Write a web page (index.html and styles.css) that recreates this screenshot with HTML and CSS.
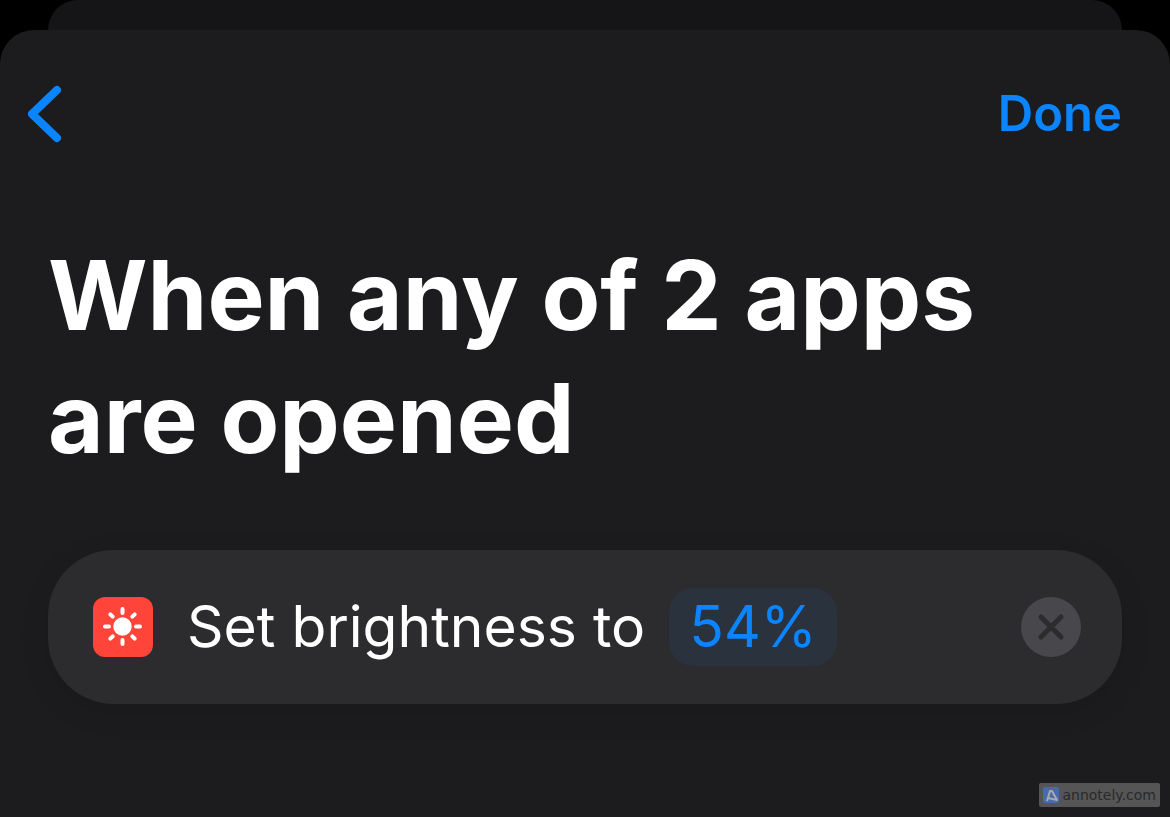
FILE: index.html
```
<!DOCTYPE html>
<html lang="en">
<head>
    <meta charset="UTF-8">
    <title>Automation</title>
    <link rel="stylesheet" href="styles.css">
</head>
<body>
<div class="back-sheet"></div>
<main class="sheet">
    <div class="nav">
        <button class="back" type="button" aria-label="Back">
            <svg width="34" height="58" viewBox="0 0 34 58"><path d="M29 5 4 29 29 53"/></svg>
        </button>
        <button class="done" type="button">Done</button>
    </div>
    <h1>When any of 2 apps are opened</h1>
    <div class="action">
        <svg class="sun" width="60" height="60" viewBox="0 0 60 60">
            <circle cx="29.5" cy="29.5" r="9.2"/>
            <path d="M29.5 12v4M29.5 43v4M12 29.5h4M43 29.5h4M17.3 17.3l2.4 2.4M39.3 39.3l2.4 2.4M41.7 17.3l-2.4 2.4M19.7 39.3l-2.4 2.4"/>
        </svg>
        <span class="text">Set brightness to</span>
        <button class="value" type="button">54%</button>
        <button class="clear" type="button" aria-label="Remove">
            <svg width="60" height="60" viewBox="0 0 60 60"><path d="M20 20 40 40M40 20 20 40"/></svg>
        </button>
    </div>
    <a class="mark" href="#">
        <svg width="16" height="16" viewBox="0 0 16 16"><rect width="16" height="16" rx="2"/><path d="M4 14 7 4h2l5 9L5 11"/></svg>
        annotely.com
    </a>
</main>
</body>
</html>
```
FILE: styles.css
```
*{box-sizing: border-box;}
html,body{height: 100%;}
body{margin: 0;background: #000;color: #fff;font-family: Inter,"Liberation Sans",sans-serif;display: flex;flex-direction: column;}
button{border: none;background: none;padding: 0;margin: 0;font: inherit;color: #0a84ff;cursor: pointer;}
svg{display: block;}
h1{margin: 0 0 70px;padding: 0 48px;font-size: 96px;line-height: 123px;font-weight: 700;}

.back-sheet{flex: none;height: 30px;margin: 0 48px;background: #151517;border-radius: 30px 30px 0 0;}
.sheet{flex: 1 0 auto;display: flex;flex-direction: column;background: #1c1c1e;border-radius: 34px 34px 0 0;}

.nav{display: flex;justify-content: space-between;align-items: center;height: 168px;margin-bottom: 36px;padding: 0 48px 0 28px;}
.back path{fill: none;stroke: #0a84ff;stroke-width: 8;stroke-linecap: round;stroke-linejoin: round;}
.done{font-size: 49px;line-height: 62px;font-weight: 600;}

.action{display: flex;align-items: center;height: 154px;margin: 0 48px;padding: 0 41px 0 45px;background: #2c2c2e;border-radius: 66px;box-shadow: 0 8px 30px rgba(0,0,0,.1);font-size: 57px;line-height: 76px;}
.sun{flex: none;background: #ff453a;border-radius: 12px;}
.sun circle{fill: #fff;}
.sun path{fill: none;stroke: #fff;stroke-width: 4;stroke-linecap: round;}
.text{margin: 0 24px 0 34px;}
.value{padding: 0 20px;height: 78px;border-radius: 24px;background: #2a323d;}
.clear{margin-left: auto;border-radius: 50%;background: #48484c;}
.clear path{stroke: #2c2c2e;stroke-width: 5;stroke-linecap: round;}

.mark{display: flex;align-items: center;align-self: flex-end;gap: 3px;height: 24px;margin: auto 10px 10px 0;padding: 0 4px;border-radius: 2px;background: #555;color: #29292a;font-family: "DejaVu Sans",sans-serif;font-size: 14px;text-decoration: none;}
.mark rect{fill: #456cad;}
.mark path{fill: none;stroke: #aaa;stroke-width: 2;stroke-linejoin: round;}
```
